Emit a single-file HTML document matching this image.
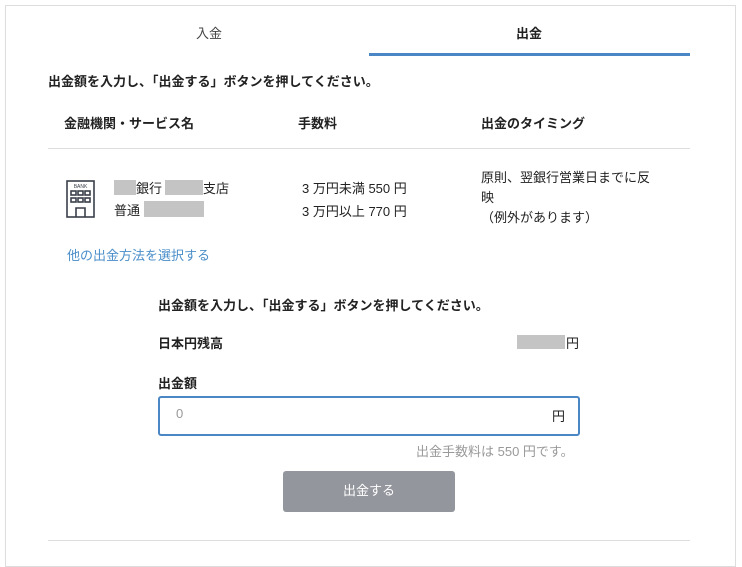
<!DOCTYPE html>
<html><head><meta charset="utf-8"><style>
body{margin:0;width:742px;height:548px;background:#fff;font-family:"Liberation Sans","Noto Sans CJK JP",sans-serif;color:#222;position:relative;overflow:hidden}
.a{position:absolute;white-space:nowrap}
.g{position:absolute;background:#c4c4c4}
</style></head><body>
<div class="a" style="left:5px;top:5px;width:729px;height:560px;border:1px solid #ddd"></div>
<div class="a" style="left:196px;top:23px;font-size:13px;color:#444">入金</div>
<div class="a" style="left:516px;top:23px;font-size:13px;font-weight:bold;color:#222">出金</div>
<div class="a" style="left:369px;top:53px;width:321px;height:3px;background:#4a87c4"></div>
<div class="a" style="left:48px;top:71px;font-size:13px;font-weight:bold">出金額を入力し、「出金する」ボタンを押してください。</div>
<div class="a" style="left:64px;top:113px;font-size:13px;font-weight:bold">金融機関・サービス名</div>
<div class="a" style="left:298px;top:113px;font-size:13px;font-weight:bold">手数料</div>
<div class="a" style="left:481px;top:113px;font-size:13px;font-weight:bold">出金のタイミング</div>
<div class="a" style="left:48px;top:148px;width:642px;height:1px;background:#ddd"></div>
<svg class="a" style="left:66px;top:180px" width="30" height="38" viewBox="0 0 30 38" fill="none" stroke="#3a3f4a" stroke-width="1.6">
<rect x="1" y="1" width="27" height="36"/>
<text x="14.5" y="8" font-size="5" text-anchor="middle" fill="#3a3f4a" stroke="none" font-family="Liberation Sans">BANK</text>
<rect x="5" y="11" width="5" height="4"/><rect x="12" y="11" width="5" height="4"/><rect x="19" y="11" width="5" height="4"/>
<rect x="5" y="18" width="5" height="4"/><rect x="12" y="18" width="5" height="4"/><rect x="19" y="18" width="5" height="4"/>
<path d="M10 37V28h9v9"/>
</svg>
<div class="g" style="left:114px;top:180px;width:22px;height:15px"></div>
<div class="a" style="left:136px;top:178px;font-size:13px">銀行</div>
<div class="g" style="left:165px;top:180px;width:38px;height:15px"></div>
<div class="a" style="left:203px;top:178px;font-size:13px">支店</div>
<div class="a" style="left:114px;top:200px;font-size:13px">普通</div>
<div class="g" style="left:144px;top:201px;width:60px;height:16px"></div>
<div class="a" style="left:302px;top:178px;font-size:13px">3 万円未満 550 円</div>
<div class="a" style="left:302px;top:201px;font-size:13px">3 万円以上 770 円</div>
<div class="a" style="left:481px;top:168px;font-size:13px;line-height:20px;white-space:normal;width:180px">原則、翌銀行営業日までに反映<br>（例外があります）</div>
<div class="a" style="left:67px;top:245px;font-size:13px;color:#4a8ec9">他の出金方法を選択する</div>
<div class="a" style="left:158px;top:295px;font-size:13px;font-weight:bold">出金額を入力し、「出金する」ボタンを押してください。</div>
<div class="a" style="left:158px;top:333px;font-size:13px;font-weight:bold">日本円残高</div>
<div class="g" style="left:517px;top:335px;width:48px;height:14px"></div>
<div class="a" style="left:566px;top:333px;font-size:13px">円</div>
<div class="a" style="left:158px;top:373px;font-size:13px;font-weight:bold">出金額</div>
<div class="a" style="left:158px;top:396px;width:418px;height:36px;border:2px solid #4a87c4;border-radius:3px"></div>
<div class="a" style="left:176px;top:406px;font-size:13px;color:#999">0</div>
<div class="a" style="left:552px;top:406px;font-size:13px">円</div>
<div class="a" style="left:416px;top:441px;font-size:13px;color:#999">出金手数料は 550 円です。</div>
<div class="a" style="left:283px;top:471px;width:172px;height:41px;background:#93969c;border-radius:3px;color:#fff;font-size:13px;text-align:center;line-height:40px">出金する</div>
<div class="a" style="left:48px;top:540px;width:642px;height:1px;background:#ddd"></div>
</body></html>
